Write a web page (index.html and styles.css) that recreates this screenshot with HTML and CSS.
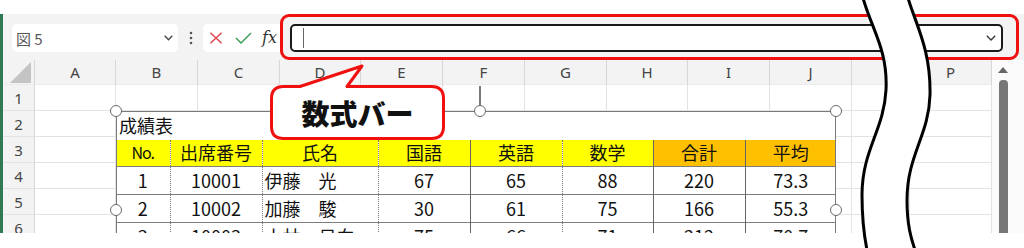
FILE: index.html
```html
<!DOCTYPE html>
<html lang="ja">
<head>
<meta charset="utf-8">
<title>数式バー</title>
<link rel="stylesheet" href="styles.css">
</head>
<body>
<div class="topstrip"></div>
<div class="app">
  <div class="fbar">
    <div class="namebox">
      <span class="nb-text">図 5</span>
      <svg class="chev" width="9" height="6" viewBox="0 0 9 6"><path d="M0.7 0.8 L4.5 4.8 L8.3 0.8" fill="none" stroke="#444" stroke-width="1.3"/></svg>
    </div>
    <div class="kebab">
      <svg width="4" height="14" viewBox="0 0 4 14"><circle cx="2" cy="2" r="1.3" fill="#555"/><circle cx="2" cy="7" r="1.3" fill="#555"/><circle cx="2" cy="12" r="1.3" fill="#555"/></svg>
    </div>
    <div class="fbtns">
      <svg class="ico-x" width="14" height="12" viewBox="0 0 14 12"><path d="M1.5 0.8 L12.5 11.2 M12.5 0.8 L1.5 11.2" stroke="#e0454e" stroke-width="1.5" fill="none"/></svg>
      <svg class="ico-ok" width="17" height="12" viewBox="0 0 17 12"><path d="M1 6 L6 11 L16 1" stroke="#3f9f59" stroke-width="1.5" fill="none"/></svg>
      <span class="fx">fx</span>
    </div>
    <div class="fhl">
      <div class="finput">
        <span class="caret"></span>
        <svg class="chev" width="10" height="6" viewBox="0 0 10 6"><path d="M0.8 0.8 L5 5 L9.2 0.8" fill="none" stroke="#333" stroke-width="1.3"/></svg>
      </div>
    </div>
  </div>
  <div class="sheet">
    <div class="grid">
      <div class="c h corner"><svg width="22" height="21" viewBox="0 0 22 21"><path d="M21 0 L21 21 L0 21 Z" fill="#c4c4c4"/></svg></div>
      <div class="c h">A</div><div class="c h">B</div><div class="c h">C</div><div class="c h">D</div><div class="c h">E</div><div class="c h">F</div><div class="c h">G</div><div class="c h">H</div><div class="c h">I</div><div class="c h">J</div><div class="c h"></div><div class="c h">P</div>

      <div class="c rh">1</div><div class="c"></div><div class="c"></div><div class="c"></div><div class="c"></div><div class="c"></div><div class="c"></div><div class="c"></div><div class="c"></div><div class="c"></div><div class="c"></div><div class="c"></div><div class="c"></div>
      <div class="c rh">2</div><div class="c"></div><div class="c"></div><div class="c"></div><div class="c"></div><div class="c"></div><div class="c"></div><div class="c"></div><div class="c"></div><div class="c"></div><div class="c"></div><div class="c"></div><div class="c"></div>
      <div class="c rh">3</div><div class="c"></div><div class="c"></div><div class="c"></div><div class="c"></div><div class="c"></div><div class="c"></div><div class="c"></div><div class="c"></div><div class="c"></div><div class="c"></div><div class="c"></div><div class="c"></div>
      <div class="c rh">4</div><div class="c"></div><div class="c"></div><div class="c"></div><div class="c"></div><div class="c"></div><div class="c"></div><div class="c"></div><div class="c"></div><div class="c"></div><div class="c"></div><div class="c"></div><div class="c"></div>
      <div class="c rh">5</div><div class="c"></div><div class="c"></div><div class="c"></div><div class="c"></div><div class="c"></div><div class="c"></div><div class="c"></div><div class="c"></div><div class="c"></div><div class="c"></div><div class="c"></div><div class="c"></div>
      <div class="c rh">6</div><div class="c"></div><div class="c"></div><div class="c"></div><div class="c"></div><div class="c"></div><div class="c"></div><div class="c"></div><div class="c"></div><div class="c"></div><div class="c"></div><div class="c"></div><div class="c"></div>
    </div>
    <div class="vscroll"><span class="arrow"></span><span class="thumb"></span></div>

    <div class="picture">
      <table class="score">
        <colgroup>
          <col class="w1"><col class="w2"><col class="w3"><col class="w4"><col class="w5"><col class="w6"><col class="w7"><col class="w8">
        </colgroup>
        <tr class="title"><td colspan="8">成績表</td></tr>
        <tr class="head">
          <th class="yel no">No.</th><th class="yel dot">出席番号</th><th class="yel dot">氏名</th><th class="yel dot">国語</th><th class="yel sol">英語</th><th class="yel dot">数学</th><th class="org sol">合計</th><th class="org sol">平均</th>
        </tr>
        <tr class="data">
          <td>1</td><td class="dot">10001</td><td class="dot name">伊藤　光</td><td class="dot">67</td><td class="sol">65</td><td class="dot">88</td><td class="sol">220</td><td class="sol">73.3</td>
        </tr>
        <tr class="data">
          <td>2</td><td class="dot">10002</td><td class="dot name">加藤　駿</td><td class="dot">30</td><td class="sol">61</td><td class="dot">75</td><td class="sol">166</td><td class="sol">55.3</td>
        </tr>
        <tr class="data">
          <td>3</td><td class="dot">10003</td><td class="dot name">小林　日向</td><td class="dot">75</td><td class="sol">66</td><td class="dot">71</td><td class="sol">212</td><td class="sol">70.7</td>
        </tr>
      </table>
      <span class="stem"></span>
      <span class="hd tl"></span><span class="hd tm"></span><span class="hd tr"></span>
      <span class="hd ml"></span><span class="hd mr"></span>
    </div>
  </div>
</div>

<div class="callout">
  <svg class="callout-shape" width="184" height="84" viewBox="0 0 184 84">
    <path d="M17.5 26.5 L34 26.5 L96 6 L81 26.5 L165.5 26.5 Q177.5 26.5 177.5 38.5 L177.5 66.5 Q177.5 78.5 165.5 78.5 L17.5 78.5 Q5.5 78.5 5.5 66.5 L5.5 38.5 Q5.5 26.5 17.5 26.5 Z" fill="#fff" stroke="#f01010" stroke-width="3" stroke-linejoin="round"/>
  </svg>
  <span class="callout-text">数式バー</span>
</div>

<svg class="wave" width="100" height="248" viewBox="850 0 100 248">
  <path d="M863,-2 C872,30 888,50 886,90 C884,130 862,150 862,195 C862,220 864,235 867,250 L915,250 C911,238 907,225 907,200 C907,155 929,135 930,95 C931,50 916,25 908,-2 Z" fill="#fff"/>
  <path d="M863,-2 C872,30 888,50 886,90 C884,130 862,150 862,195 C862,220 864,235 867,250" fill="none" stroke="#000" stroke-width="3"/>
  <path d="M908,-2 C916,25 931,50 930,95 C929,135 907,155 907,200 C907,225 911,238 915,250" fill="none" stroke="#000" stroke-width="3"/>
</svg>
</body>
</html>
```

FILE: styles.css
```css
body {
  margin: 0;
  width: 1024px;
  height: 248px;
  overflow: hidden;
  background: #fff;
  position: relative;
  font-family: "Noto Sans", "Noto Sans CJK JP", sans-serif;
}

.topstrip {
  height: 14px;
  background: #fff;
}

.app {
  height: 219px;
  border-left: 3px solid #2f7a55;
  background: #f3f3f3;
  overflow: hidden;
}

/* formula bar row */
.fbar {
  height: 46px;
  display: flex;
  align-items: flex-start;
}

.namebox {
  margin: 10px 0 0 9px;
  width: 166px;
  height: 28px;
  box-sizing: border-box;
  background: #fff;
  border-radius: 5px;
  display: flex;
  align-items: center;
  justify-content: space-between;
  padding: 0 5px 0 4px;
}

.nb-text {
  font-family: "Noto Sans CJK JP", sans-serif;
  font-size: 15px;
  color: #555;
}

.kebab {
  width: 25px;
  height: 28px;
  margin-top: 10px;
  display: flex;
  align-items: center;
  justify-content: center;
}

.fbtns {
  width: 77px;
  height: 28px;
  margin-top: 10px;
  box-sizing: border-box;
  background: #fff;
  border-radius: 5px 0 0 5px;
  display: flex;
  align-items: center;
  padding-left: 6px;
}

.ico-x { margin-right: 12px; }
.ico-ok { margin-right: 10px; }

.fx {
  font-family: "DejaVu Serif", "Liberation Serif", serif;
  font-style: italic;
  font-size: 16px;
  color: #333;
  line-height: 1;
}

.fhl {
  width: 739px;
  height: 46px;
  box-sizing: border-box;
  border: 3px solid #f01010;
  border-radius: 9px;
  padding: 7px 13px 0 7px;
}

.finput {
  height: 28px;
  box-sizing: border-box;
  border: 2px solid #1a1a1a;
  border-radius: 5px;
  background: #fff;
  display: flex;
  align-items: center;
  justify-content: space-between;
  padding: 0 5px 0 11px;
}

.caret {
  width: 1px;
  height: 20px;
  background: #666;
}

/* sheet */
.sheet {
  height: 173px;
  display: flex;
  position: relative;
  background: #fff;
}

.grid {
  display: grid;
  grid-template-columns: 32px 81px 82px 82px 81px 82px 82px 82px 81px 82px 82px 58px 82px;
  grid-template-rows: 25px repeat(6, 26px);
}

.c {
  box-sizing: border-box;
  border-right: 1px solid #e3e3e3;
  border-bottom: 1px solid #e3e3e3;
  background: #fff;
}

.h {
  background: #f3f3f3;
  border-right-color: #d7d7d7;
  border-bottom-color: #ebebeb;
  display: flex;
  align-items: center;
  justify-content: center;
  font-size: 15px;
  color: #444;
}

.corner {
  align-items: flex-end;
  justify-content: flex-end;
  padding: 0 2px 1px 0;
}

.rh {
  background: #f3f3f3;
  border-right-color: #d7d7d7;
  border-bottom-color: #e3e3e3;
  display: flex;
  align-items: center;
  justify-content: center;
  font-size: 15px;
  color: #444;
}

.vscroll {
  width: 32px;
  position: relative;
  background: #fafafa;
}

.arrow {
  position: absolute;
  left: 6px;
  top: 7px;
  width: 0;
  height: 0;
  border-left: 5px solid transparent;
  border-right: 5px solid transparent;
  border-bottom: 6px solid #666;
}

.thumb {
  position: absolute;
  left: 7px;
  top: 20px;
  width: 9px;
  height: 170px;
  border-radius: 4px;
  background: #777;
}

/* picture object (table image) */
.picture {
  position: absolute;
  left: 113px;
  top: 51px;
  width: 720px;
  height: 198px;
  background: #fff;
  outline: 1.5px solid #7a7a7a;
  outline-offset: -1px;
}

.score {
  width: 720px;
  table-layout: fixed;
  border-collapse: collapse;
  font-family: "Noto Sans CJK JP", sans-serif;
  font-size: 18px;
  color: #111;
}

.w1 { width: 54px; }
.w2 { width: 92px; }
.w3 { width: 116px; }
.w4 { width: 92px; }
.w5 { width: 92px; }
.w6 { width: 91px; }
.w7 { width: 92px; }
.w8 { width: 91px; }

.score td,
.score th {
  padding: 0;
  text-align: center;
  vertical-align: middle;
  font-weight: normal;
  line-height: 1.2;
  white-space: nowrap;
  overflow: hidden;
}

.score .no {
  font-size: 16px;
  letter-spacing: -1px;
}

.title td {
  height: 29px;
  text-align: left;
  padding-left: 3px;
}

.head th {
  height: 26px;
}

.data td {
  height: 27px;
  border-top: 1px solid #7d7d7d;
}

.score .name {
  text-align: left;
  padding-left: 2px;
}

.yel { background: #ffff00; }
.org { background: #ffc000; }

.dot { border-left: 1px dotted #777; }
.sol { border-left: 1px solid #666; }

.stem {
  position: absolute;
  left: 363px;
  top: -25px;
  width: 1.5px;
  height: 20px;
  background: #7a7a7a;
}

.hd {
  position: absolute;
  width: 12px;
  height: 12px;
  box-sizing: border-box;
  border: 1.5px solid #6b6b6b;
  border-radius: 50%;
  background: #fff;
}

.tl { left: -6px; top: -6px; }
.tm { left: 358px; top: -6px; }
.tr { left: 714px; top: -6px; }
.ml { left: -6px; top: 93px; }
.mr { left: 714px; top: 93px; }

/* annotation callout */
.callout {
  position: absolute;
  left: 266px;
  top: 60px;
  width: 184px;
  height: 84px;
}

.callout-shape {
  position: absolute;
  left: 0;
  top: 0;
}

.callout-text {
  position: absolute;
  left: 5.5px;
  top: 26.5px;
  width: 172px;
  height: 52px;
  display: flex;
  align-items: center;
  justify-content: center;
  font-family: "Noto Sans CJK JP", sans-serif;
  font-weight: 900;
  font-size: 28px;
  color: #111;
}

/* wavy cut mark */
.wave {
  position: absolute;
  left: 850px;
  top: 0;
}
```
